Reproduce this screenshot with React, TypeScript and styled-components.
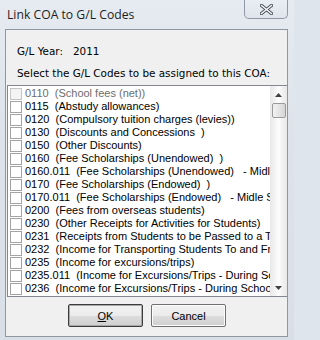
import React from "react";
import styled, { createGlobalStyle } from "styled-components";

const Global = createGlobalStyle`
  html, body { margin: 0; padding: 0; background: #dfe5ec; }
  #root { width: 294px; height: 340px; overflow: hidden; }
`;

const Frame = styled.div`
  width: 294px;
  height: 340px;
  box-sizing: border-box;
  display: flex;
  flex-direction: column;
  background: linear-gradient(180deg, #e6ebf1 0%, #dde3ea 40%, #d9dfe6 100%);
  font-family: "Liberation Sans", Arial, sans-serif;
  font-size: 11px;
  color: #000;
`;

const TitleBar = styled.div`
  height: 29px;
  display: flex;
  align-items: flex-start;
  justify-content: space-between;
  flex-shrink: 0;
`;

const Title = styled.div`
  font-family: "Open Sans", "Segoe UI", sans-serif;
  font-size: 12.2px;
  line-height: 16px;
  color: #1e1e1e;
  padding: 7px 0 0 7px;
`;

const CloseButton = styled.div`
  width: 44px;
  height: 19px;
  margin-right: 6px;
  box-sizing: border-box;
  border: 1px solid #8e97a3;
  border-top: none;
  border-radius: 0 0 5px 5px;
  background: linear-gradient(180deg, #e9eef3 0%, #dfe5ec 100%);
  display: flex;
  align-items: center;
  justify-content: center;
`;

const Panel = styled.div`
  margin: 0 6px 0 5px;
  height: 308px;
  box-sizing: border-box;
  border: 1px solid #8f98a2;
  background: #f0f0f0;
  display: flex;
  flex-direction: column;
  padding: 0 0 0 1px;
`;

const LabelText = styled.span<{ $width?: number }>`
  font-family: "DejaVu Sans", Tahoma, sans-serif;
  font-size: 10.4px;
  ${(p) => (p.$width ? `width: ${p.$width}px;` : "")}
`;

const YearRow = styled.div`
  display: flex;
  padding: 14px 0 0 10px;
  height: 14px;
  line-height: 14px;
`;

const Prompt = styled.div`
  padding: 8px 0 0 10px;
  height: 14px;
  line-height: 14px;
`;

const ListBox = styled.div`
  margin-top: 5px;
  height: 212px;
  box-sizing: border-box;
  border: 1px solid #828790;
  border-right: none;
  background: #fff;
  display: flex;
  overflow: hidden;
`;

const Rows = styled.div`
  flex: 1;
  min-width: 0;
  overflow: hidden;
  padding-top: 1px;
`;

const Row = styled.div<{ $disabled?: boolean }>`
  height: 13px;
  display: flex;
  align-items: center;
  gap: 3px;
  padding-left: 2px;
  white-space: pre;
  line-height: 13px;
  overflow: hidden;
  color: ${(p) => (p.$disabled ? "#6d6d6d" : "#000")};
`;

const Check = styled.div<{ $disabled?: boolean }>`
  width: 12px;
  height: 12px;
  box-sizing: border-box;
  flex-shrink: 0;
  border: 1px solid ${(p) => (p.$disabled ? "#c4c4c4" : "#a3a3a3")};
  background: ${(p) => (p.$disabled ? "#f4f4f4" : "#fff")};
`;

const ScrollBar = styled.div`
  width: 17px;
  flex-shrink: 0;
  display: flex;
  flex-direction: column;
  align-items: center;
  background: linear-gradient(90deg, #e8e8e8 0%, #f3f3f3 30%, #fdfdfd 50%, #f3f3f3 70%, #e8e8e8 100%);
`;

const Arrow = styled.div`
  height: 17px;
  display: flex;
  align-items: center;
  justify-content: center;
`;

const Thumb = styled.div`
  width: 14px;
  height: 15px;
  box-sizing: border-box;
  border: 1px solid #9a9a9a;
  border-radius: 2px;
  background: linear-gradient(90deg, #f2f2f2 0%, #e4e4e4 50%, #d6d6d6 100%);
`;

const Track = styled.div`
  flex: 1;
`;

const ButtonRow = styled.div`
  display: flex;
  gap: 8px;
  padding: 7px 0 0 61px;
`;

const Button = styled.div<{ $default?: boolean }>`
  width: 75px;
  height: 23px;
  box-sizing: border-box;
  display: flex;
  align-items: center;
  justify-content: center;
  border: 1px solid ${(p) => (p.$default ? "#3c3c3c" : "#707070")};
  box-shadow: ${(p) => (p.$default ? "inset 0 0 0 1px #a8a8a8" : "inset 0 0 0 1px #fcfcfc")};
  border-radius: 2px;
  background: linear-gradient(180deg, #f2f2f2 0%, #ebebeb 50%, #dddddd 51%, #cfcfcf 100%);
  font-size: 11px;
`;

const U = styled.span`
  text-decoration: underline;
`;

const items: [string, string][] = [
  ["0110", "(School fees (net))"],
  ["0115", "(Abstudy allowances)"],
  ["0120", "(Compulsory tuition charges (levies))"],
  ["0130", "(Discounts and Concessions  )"],
  ["0150", "(Other Discounts)"],
  ["0160", "(Fee Scholarships (Unendowed)  )"],
  ["0160.011", "(Fee Scholarships (Unendowed)   - Midle School)"],
  ["0170", "(Fee Scholarships (Endowed)  )"],
  ["0170.011", "(Fee Scholarships (Endowed)   - Midle School)"],
  ["0200", "(Fees from overseas students)"],
  ["0230", "(Other Receipts for Activities for Students)"],
  ["0231", "(Receipts from Students to be Passed to a Third Party)"],
  ["0232", "(Income for Transporting Students To and From School)"],
  ["0235", "(Income for excursions/trips)"],
  ["0235.011", "(Income for Excursions/Trips - During School Hours)"],
  ["0236", "(Income for Excursions/Trips - During School Hours)"],
  ["0236.011", "(Income for Excursions/Trips - During School Hours)"],
];

export default function App() {
  return (
    <>
      <Global />
      <Frame>
        <TitleBar>
          <Title>Link COA to G/L Codes</Title>
          <CloseButton>
            <svg width="13" height="11" viewBox="0 0 13 11">
              <path
                d="M1.5 1.5 L11.5 9.5 M11.5 1.5 L1.5 9.5"
                stroke="#4a4f57"
                strokeWidth="3.4"
                strokeLinecap="round"
              />
              <path
                d="M1.5 1.5 L11.5 9.5 M11.5 1.5 L1.5 9.5"
                stroke="#f4f6f8"
                strokeWidth="1.6"
                strokeLinecap="round"
              />
            </svg>
          </CloseButton>
        </TitleBar>
        <Panel>
          <YearRow>
            <LabelText $width={56}>G/L Year:</LabelText>
            <LabelText>2011</LabelText>
          </YearRow>
          <Prompt>
            <LabelText>Select the G/L Codes to be assigned to this COA:</LabelText>
          </Prompt>
          <ListBox>
            <Rows>
              {items.map(([code, name], i) => (
                <Row key={code + i} $disabled={i === 0}>
                  <Check $disabled={i === 0} />
                  <span>{code + "  " + name}</span>
                </Row>
              ))}
            </Rows>
            <ScrollBar>
              <Arrow>
                <svg width="7" height="4" viewBox="0 0 7 4">
                  <path d="M0 4 L3.5 0 L7 4 Z" fill="#404040" />
                </svg>
              </Arrow>
              <Thumb />
              <Track />
              <Arrow>
                <svg width="7" height="4" viewBox="0 0 7 4">
                  <path d="M0 0 L3.5 4 L7 0 Z" fill="#404040" />
                </svg>
              </Arrow>
            </ScrollBar>
          </ListBox>
          <ButtonRow>
            <Button $default>
              <span>
                <U>O</U>K
              </span>
            </Button>
            <Button>Cancel</Button>
          </ButtonRow>
        </Panel>
      </Frame>
    </>
  );
}
